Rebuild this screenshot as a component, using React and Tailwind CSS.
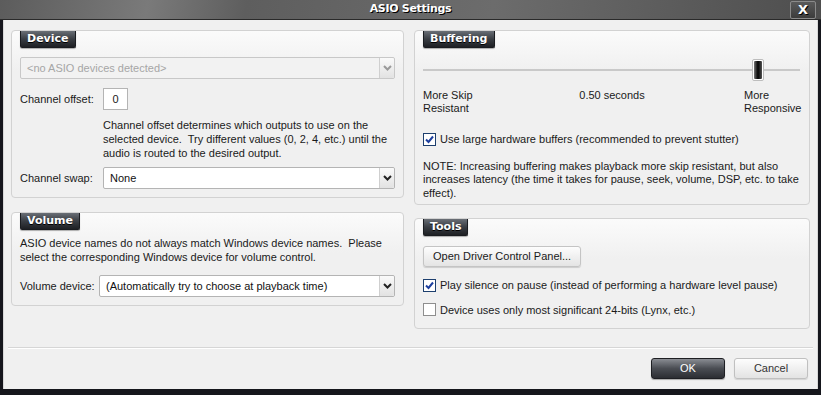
import React from "react";

const sans = { fontFamily: '"Liberation Sans", Arial, sans-serif' };

const Tab = ({ children }) => (
  <div className="flex">
    <div
      className="h-[17px] px-[6px] flex items-center text-white text-[11px] font-bold rounded-b-[2px] border border-t-0 border-[#1a1c20] bg-gradient-to-b from-[#6a6f76] via-[#3a3e44] to-[#1e2024] shadow-[0_1px_1px_rgba(0,0,0,0.3)] [text-shadow:0_1px_0_#000]"
      style={{ fontFamily: '"DejaVu Sans", Verdana, sans-serif' }}
    >
      {children}
    </div>
  </div>
);

const Panel = ({ title, className, children }) => (
  <div
    className={
      "border border-[#d2d2d2] rounded-[4px] bg-gradient-to-b from-[#fbfbfb] to-[#f0f0f0] to-[40px] px-[8px] " +
      className
    }
  >
    <Tab>{title}</Tab>
    {children}
  </div>
);

const Arrow = ({ disabled }) => (
  <div className="w-[15px] h-full flex items-center justify-center border-l border-[#cfcfcf] bg-gradient-to-b from-[#fafafa] to-[#e2e2e2] rounded-r-[2px]">
    <svg width="9" height="6" viewBox="0 0 9 6">
      <path
        d="M1 1 L4.5 4.5 L8 1"
        fill="none"
        stroke={disabled ? "#9a9a9a" : "#222"}
        strokeWidth="2"
      />
    </svg>
  </div>
);

const Combo = ({ value, disabled, className }) => (
  <div
    className={
      "h-[22px] flex items-stretch border rounded-[2px] " +
      (disabled ? "border-[#c8c8c8] bg-[#f2f2f2]" : "border-[#b4b4b4] bg-white") +
      " " +
      className
    }
  >
    <div
      className={
        "flex-1 flex items-center px-[6px] text-[11px] " +
        (disabled ? "text-[#a6a6a6]" : "text-[#111]")
      }
    >
      {value}
    </div>
    <Arrow disabled={disabled} />
  </div>
);

const Check = ({ checked, label, className }) => (
  <div className={"flex items-center gap-[4px] " + className}>
    <div
      className={
        "w-[13px] h-[13px] border bg-white flex items-center justify-center " +
        (checked ? "border-[#1d3f6e]" : "border-[#8e8e8e]")
      }
    >
      {checked && (
        <svg width="9" height="9" viewBox="0 0 9 9">
          <path d="M1 4.5 L3.5 7 L8 1.5" fill="none" stroke="#1d3f9e" strokeWidth="2" />
        </svg>
      )}
    </div>
    <span className="text-[11px] text-[#1a1a1a]">{label}</span>
  </div>
);

export default function App() {
  return (
    <div className="w-[821px] h-[395px] bg-[#15161c] flex flex-col overflow-hidden" style={sans}>
      {/* title bar */}
      <div className="h-[20px] relative flex items-center justify-center bg-[linear-gradient(100deg,#5c5c5c_0%,#7a7a7a_18%,#5e5e5e_30%,#6c6c6c_60%,#4e4e4e_100%)] border-b border-[#2a2a2a]">
        <span
          className="text-white text-[11px] font-bold tracking-[-0.3px] [text-shadow:1px_1px_0_#000]"
          style={{ fontFamily: '"DejaVu Sans", Verdana, sans-serif' }}
        >
          ASIO Settings
        </span>
        <div className="absolute right-[5px] top-[1px] w-[26px] h-[18px] border border-[#8a8a8a] rounded-[2px] bg-gradient-to-b from-[#5a5a5a] to-[#3c3c3c] flex items-center justify-center text-white font-bold text-[13px] [text-shadow:1px_1px_0_#000]" style={{ fontFamily: '"DejaVu Sans", Verdana, sans-serif' }}>
          X
        </div>
      </div>

      {/* body */}
      <div className="flex-1 mx-[3px] mb-[6px] bg-[#f0f0f0] border-x border-[#d8d8d8] flex flex-col text-[#1a1a1a]">
        <div className="flex gap-[10px] pl-[7px] pt-[10px]">
          {/* left column */}
          <div className="w-[393px] flex flex-col gap-[14px]">
            <Panel title="Device" className="h-[168px]">
              <Combo value="<no ASIO devices detected>" disabled className="mt-[9px]" />
              <div className="flex items-center mt-[9px]">
                <span className="w-[83px] text-[11px]">Channel offset:</span>
                <div className="w-[25px] h-[22px] border border-[#b4b4b4] bg-white flex items-center justify-center text-[11px]">
                  0
                </div>
              </div>
              <p className="ml-[83px] mt-[8px] text-[11px] leading-[14px] w-[300px]">
                Channel offset determines which outputs to use on the selected device.&nbsp; Try different values (0, 2, 4, etc.) until the audio is routed to the desired output.
              </p>
              <div className="flex items-center mt-[7px]">
                <span className="w-[83px] text-[11px]">Channel swap:</span>
                <Combo value="None" className="flex-1" />
              </div>
            </Panel>

            <Panel title="Volume" className="h-[94px]">
              <p className="mt-[6px] text-[11px] leading-[14px]">
                ASIO device names do not always match Windows device names.&nbsp; Please select the corresponding Windows device for volume control.
              </p>
              <div className="flex items-center mt-[11px]">
                <span className="w-[79px] text-[11px]">Volume device:</span>
                <Combo value="(Automatically try to choose at playback time)" className="flex-1" />
              </div>
            </Panel>
          </div>

          {/* right column */}
          <div className="w-[396px] flex flex-col gap-[13px]">
            <Panel title="Buffering" className="h-[175px]">
              <div className="relative h-[22px] mt-[11px] mr-[1px] flex items-center">
                <div className="w-full h-[2px] bg-[#c9c9c9]" />
                <div className="absolute left-[329px] top-0 w-[12px] h-[22px] rounded-[2px] border border-[#bdbdbd] bg-white p-[1px]">
                  <div className="w-full h-full bg-gradient-to-r from-[#777] via-[#050505] to-[#555] rounded-[1px]" />
                </div>
              </div>
              <div className="flex justify-between items-start mt-[8px] text-[11px] leading-[13px]">
                <div className="w-[120px]">
                  More Skip
                  <br />
                  Resistant
                </div>
                <div>0.50 seconds</div>
                <div className="w-[120px] flex justify-end">
                  <div className="w-[57px]">
                    More
                    <br />
                    Responsive
                  </div>
                </div>
              </div>
              <Check
                checked
                label="Use large hardware buffers (recommended to prevent stutter)"
                className="mt-[16px]"
              />
              <p className="mt-[12px] text-[11px] leading-[13.5px]">
                NOTE: Increasing buffering makes playback more skip resistant, but also increases latency (the time it takes for pause, seek, volume, DSP, etc. to take effect).
              </p>
            </Panel>

            <Panel title="Tools" className="h-[111px]">
              <div className="flex mt-[10px]">
                <div className="h-[21px] px-[9px] flex items-center text-[11px] border border-[#c4c4c4] rounded-[3px] bg-gradient-to-b from-[#fdfdfd] to-[#e4e4e4] shadow-[0_1px_1px_rgba(0,0,0,0.15)]">
                  Open Driver Control Panel...
                </div>
              </div>
              <Check
                checked
                label="Play silence on pause (instead of performing a hardware level pause)"
                className="mt-[10px]"
              />
              <Check
                label="Device uses only most significant 24-bits (Lynx, etc.)"
                className="mt-[8px]"
              />
            </Panel>
          </div>
        </div>

        <div className="flex-1" />
        <div className="mx-[4px] h-[2px] border-t border-[#d6d6d6] bg-white" />
        <div className="flex justify-end gap-[9px] pr-[9px] pt-[9px] pb-[10px]">
          <div className="w-[74px] h-[21px] flex items-center justify-center text-white text-[11px] border border-[#1e1f23] rounded-[3px] bg-gradient-to-b from-[#8a8d93] via-[#4a4d53] to-[#2c2e33] shadow-[0_1px_1px_rgba(0,0,0,0.3)]">
            OK
          </div>
          <div className="w-[74px] h-[21px] flex items-center justify-center text-[#333] text-[11px] border border-[#c0c0c0] rounded-[3px] bg-gradient-to-b from-[#fdfdfd] to-[#e3e3e3] shadow-[0_1px_1px_rgba(0,0,0,0.12)]">
            Cancel
          </div>
        </div>
      </div>
    </div>
  );
}
